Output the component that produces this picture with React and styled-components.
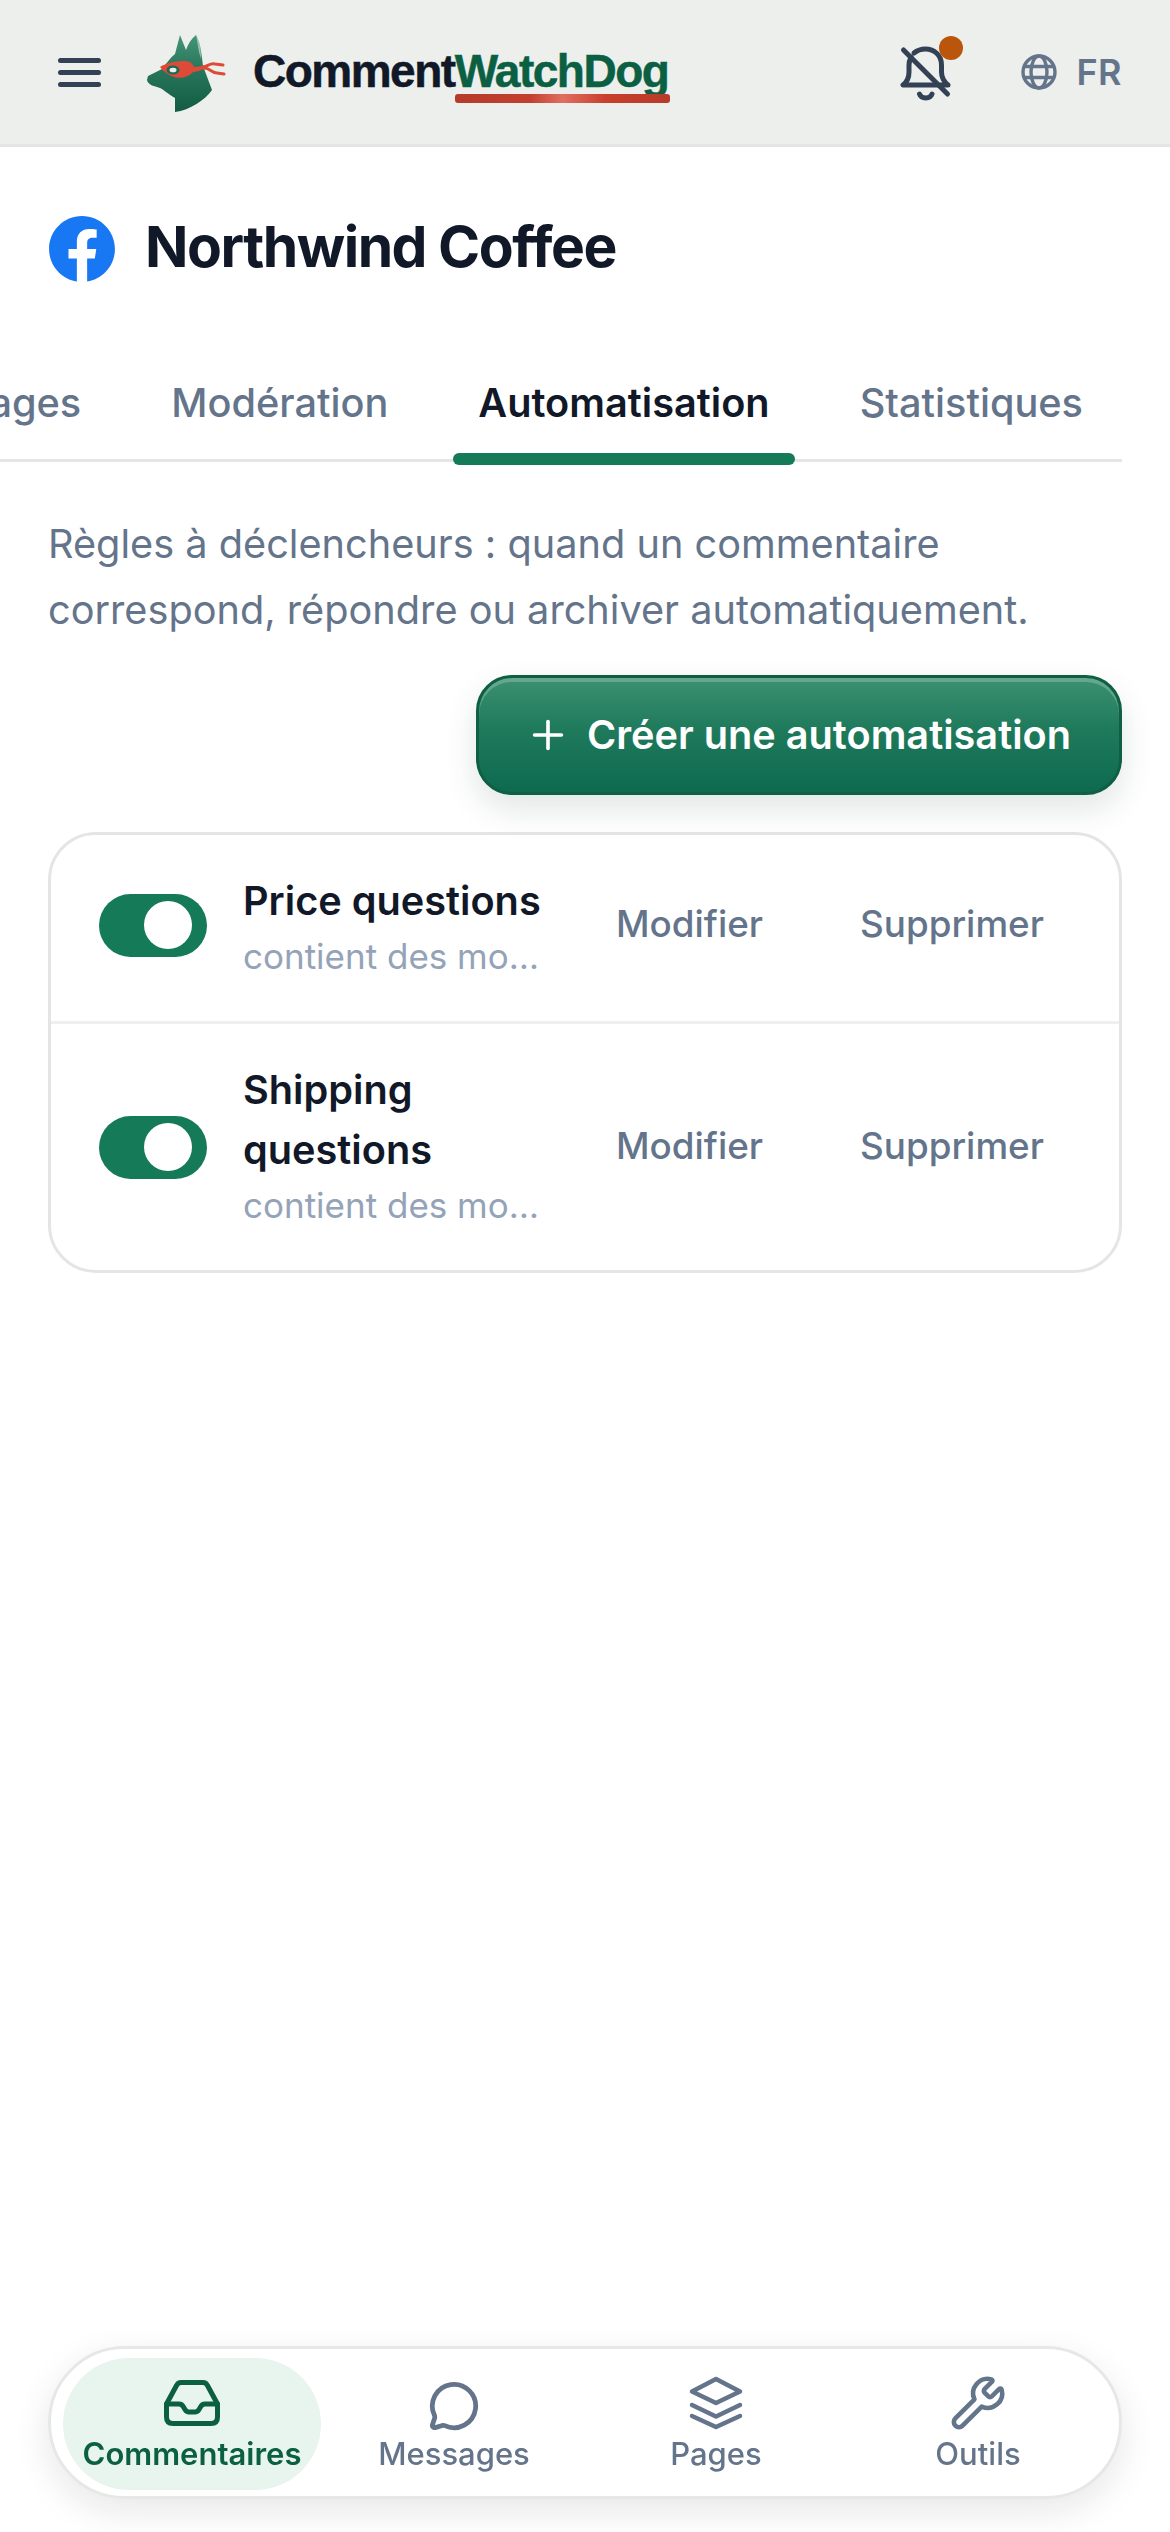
import React from 'react';
import styled, { createGlobalStyle } from 'styled-components';
import { FaFacebook } from 'react-icons/fa';
import { MessageCircle, Wrench, Plus } from 'lucide-react';

const Global = createGlobalStyle`
  html, body { margin: 0; padding: 0; background: #fff; }
  * { box-sizing: border-box; }
  body { font-family: Inter, "Noto Sans", sans-serif; }
`;

const Page = styled.div`
  width: 1170px;
  min-height: 2532px;
  background: #fff;
`;
const Header = styled.header`
  height: 147px;
  background: #ecefeb;
  border-bottom: 3px solid #e4e6e3;
  display: flex;
  align-items: center;
  padding: 0 48px 0 58px;
`;
const Burger = styled.button`
  width: 43px;
  height: 29px;
  padding: 0;
  border: 0;
  background: none;
  display: flex;
  flex-direction: column;
  justify-content: space-between;
  margin-right: 29px;
  span { display: block; height: 5px; border-radius: 3px; background: #334155; }
`;
const LogoMark = styled.svg`
  width: 120px;
  height: 100px;
  flex: none;
`;
const Word = styled.div`
  margin-left: 3px;
  font-family: "Liberation Sans", Arial, sans-serif;
  font-weight: 700;
  font-size: 46px;
  letter-spacing: -1.5px;
  line-height: 52px;
  color: #111827;
  margin-top: -2px;
  -webkit-text-stroke: 0.5px currentColor;
`;
const Green = styled.span`
  position: relative;
  color: #0b5f42;
  &::after {
    content: '';
    position: absolute;
    left: 0;
    right: -2px;
    top: 49px;
    height: 9px;
    border-radius: 3px;
    background: linear-gradient(90deg, #b63a2a 0%, #c4402e 35%, #e06f62 50%, #c93f2c 70%, #b83a2a 100%);
  }
`;
const Right = styled.div`
  margin-left: auto;
  display: flex;
  align-items: center;
`;
const BellBox = styled.div`
  position: relative;
  width: 60px;
  height: 60px;
  margin-right: 66px;
  margin-top: 3px;
`;
const Dot = styled.span`
  position: absolute;
  left: 44px;
  top: -8px;
  width: 24px;
  height: 24px;
  border-radius: 50%;
  background: #b9560c;
`;
const Lang = styled.div`
  display: flex;
  align-items: center;
  gap: 20px;
  font-size: 36px;
  font-weight: 600;
  color: #64748b;
  letter-spacing: 0.4px;
`;
const TitleRow = styled.div`
  display: flex;
  align-items: center;
  gap: 29px;
  padding: 69px 48px 0;
  height: 135px;
`;
const Title = styled.h1`
  margin: -5px 0 0;
  font-size: 57px;
  font-weight: 700;
  color: #111827;
  letter-spacing: -1.5px;
`;
const Tabs = styled.div`
  display: flex;
  justify-content: flex-end;
  gap: 40px;
  margin: 81px 48px 0 0;
  padding: 0 14px 0 0;
  height: 99px;
  border-bottom: 3px solid #e4e6e5;
  width: 1122px;
  clip-path: inset(0 -1px -6px 0);
`;
const Tab = styled.div`
  position: relative;
  flex: none;
  padding: 10px 25px 0;
  font-size: 39.7px;
  line-height: 60px;
  font-weight: ${p => (p.$active ? 600 : 500)};
  color: ${p => (p.$active ? '#111827' : '#64748b')};
  ${p => p.$active && `
    &::after {
      content: '';
      position: absolute;
      left: 0;
      right: 0;
      bottom: -6px;
      height: 12px;
      border-radius: 6px;
      background: #157a57;
    }
  `}
`;
const Description = styled.p`
  margin: 49px 48px 0;
  font-size: 39.7px;
  line-height: 66px;
  color: #64748b;
`;
const ActionBar = styled.div`
  display: flex;
  justify-content: flex-end;
  padding: 32px 48px 0;
`;
const CreateButton = styled.button`
  display: flex;
  align-items: center;
  gap: 16px;
  height: 120px;
  padding: 0 48px 0 46px;
  border-radius: 36px;
  border: 3px solid #0f5f45;
  color: #fff;
  font-family: inherit;
  font-size: 39.7px;
  font-weight: 600;
  background: linear-gradient(180deg, #3b9071 0%, #1f7a5c 45%, #0e6a4f 100%);
  box-shadow: inset 0 4px 0 rgba(255,255,255,.22), 0 14px 32px rgba(15,60,45,.13);
`;
const Card = styled.div`
  margin: 37px 48px 0;
  border: 3px solid #e4e6e5;
  border-radius: 48px;
  background: #fff;
`;
const Row = styled.div`
  display: flex;
  align-items: center;
  padding: 36px 0 36px 48px;
  & + & { border-top: 3px solid #eef0ef; }
`;
const Toggle = styled.span`
  flex: none;
  width: 108px;
  height: 63px;
  margin-bottom: ${p => p.$lift}px;
  border-radius: 32px;
  background: #157a57;
  display: flex;
  align-items: center;
  justify-content: flex-end;
  padding-right: 15px;
  &::before {
    content: '';
    width: 48px;
    height: 48px;
    border-radius: 50%;
    background: #fff;
  }
`;
const RowText = styled.div`
  width: 300px;
  flex: none;
  margin-left: 36px;
  min-width: 0;
`;
const RowTitle = styled.div`
  font-size: 39.7px;
  line-height: 60px;
  font-weight: 600;
  color: #111827;
`;
const RowSub = styled.div`
  font-size: 35px;
  line-height: 54px;
  margin: -2px 0 2px;
  color: #94a3b8;
  white-space: nowrap;
  overflow: hidden;
  text-overflow: ellipsis;
`;
const RowAction = styled.button`
  border: 0;
  background: none;
  padding: 0;
  font-family: inherit;
  font-size: 36.8px;
  font-weight: 500;
  color: #64748b;
  margin-left: ${p => p.$gap}px;
  margin-bottom: ${p => p.$lift}px;
`;
const BottomNav = styled.nav`
  position: fixed;
  left: 48px;
  top: 2346px;
  width: 1074px;
  height: 153px;
  border: 3px solid #e6e8e6;
  border-radius: 77px;
  background: #fff;
  box-shadow: 0 12px 36px rgba(15,23,42,.1);
  padding: 9px 10px;
  display: grid;
  grid-template-columns: repeat(4, 262px);
`;
const NavItem = styled.div`
  height: 132px;
  margin: 0 2px;
  border-radius: 66px;
  padding-top: 18px;
  display: flex;
  flex-direction: column;
  align-items: center;
  background: ${p => (p.$active ? '#e8f4ee' : 'transparent')};
  color: ${p => (p.$active ? '#0b5f42' : '#64748b')};
  font-size: 31px;
  font-weight: ${p => (p.$active ? 600 : 500)};
`;
const NavIcon = styled.div`
  height: 54px;
  display: flex;
  align-items: center;
  justify-content: center;
`;
const NavLabel = styled.div`
  line-height: 40px;
  margin-top: 4px;
`;
const MessageGlyph = styled(MessageCircle)`
  margin-top: 5px;
`;

const Dog = () => (
  <LogoMark viewBox="0 0 120 100" aria-hidden="true">
    <defs>
      <linearGradient id="dogFill" x1="0" y1="0" x2="0" y2="1">
        <stop offset="0" stopColor="#459578" />
        <stop offset=".45" stopColor="#27765b" />
        <stop offset="1" stopColor="#125c43" />
      </linearGradient>
    </defs>
    <path fill="url(#dogFill)" d="M45 90 L45 76 C38 72 34 68 30 66 C24 64 18 63 17 58 L18 54 L32 47 C36 42 40 36 45 32 L50 13 L56 28 C58 22 61 17 66 13 C70 20 71 28 72 36 L73 44 L82 68 C75 78 60 88 45 90 Z" />
    <path fill="#e8f1ec" opacity=".55" d="M66 13 C70 20 71 28 71 37 L69 30 C68 24 67 18 66 13 Z" />
    <path fill="#de4a38" d="M30 45 C36 41 46 39 55 39 C60 39 63 42 64 45 C68 45 72 44 74 43 L74 47 C70 48 67 50 63 50 C59 55 50 57 44 55 C38 53 33 49 30 45 Z" />
    <path fill="none" stroke="#de4a38" strokeWidth="3" strokeLinecap="round" d="M73 45 C78 44 80 41 85 42 L93 43 M74 46 C80 46 82 51 87 51 L94 52" />
    <ellipse cx="43" cy="48" rx="6.500" ry="4.500" fill="#1d6a50" />
    <ellipse cx="43" cy="48" rx="3.500" ry="2.300" fill="#e8f1ec" />
  </LogoMark>
);

const BellOff = () => (
  <svg width="60" height="60" viewBox="0 0 60 60" fill="none" stroke="#334155" strokeWidth="5" strokeLinecap="round" strokeLinejoin="round" aria-hidden="true">
    <path d="M16 13 C14.500 16 14 18 14 21 V28 C14 33 12 38 8 41 H53 C48 37 46.500 33 46.500 28 V21 C46.500 11 39 5 30.500 5 C26 5 22 6.500 19 9" />
    <path d="M8.500 6 L52.500 50" />
    <path d="M24.500 50 a6.500 5.500 0 0 0 12.500 0" />
  </svg>
);

const Globe = () => (
  <svg width="36" height="36" viewBox="0 0 36 36" fill="none" stroke="#64748b" strokeWidth="3.400" aria-hidden="true">
    <circle cx="18" cy="18" r="16" />
    <ellipse cx="18" cy="18" rx="8" ry="16" />
    <path d="M3.500 12.500 H32.500 M3.500 23.500 H32.500" />
  </svg>
);

const InboxIcon = () => (
  <svg width="60" height="50" viewBox="0 0 60 50" fill="none" stroke="#0b5f42" strokeWidth="5" strokeLinejoin="round" strokeLinecap="round" aria-hidden="true">
    <path d="M4.500 26 L14.500 7.500 Q16 4.500 19 4.500 H41 Q44 4.500 45.500 7.500 L55.500 26 V39 Q55.500 45.500 49 45.500 H11 Q4.500 45.500 4.500 39 Z" />
    <path d="M4.500 26 H17 Q20 26 21.500 29 L23 31.500 Q24.500 34 27 34 H33 Q35.500 34 37 31.500 L38.500 29 Q40 26 43 26 H55.500" />
  </svg>
);

const LayersIcon = () => (
  <svg width="60" height="54" viewBox="0 0 60 54" fill="none" stroke="#64748b" strokeWidth="4.500" strokeLinejoin="round" strokeLinecap="round" aria-hidden="true">
    <path d="M30 3 L54 15.500 L30 27 L6 15.500 Z" />
    <path d="M6 29 L30 40.500 L54 29" />
    <path d="M6 40 L30 51 L54 40" />
  </svg>
);

const rows = [
  { name: 'Price questions', toggleLift: 6, actionLift: 10 },
  { name: 'Shipping questions', toggleLift: 0, actionLift: 4 },
];

const navItems = [
  { label: 'Commentaires', icon: <InboxIcon />, active: true },
  { label: 'Messages', icon: <MessageGlyph size={52} strokeWidth={2.2} /> },
  { label: 'Pages', icon: <LayersIcon /> },
  { label: 'Outils', icon: <Wrench size={58} strokeWidth={1.9} /> },
];

export default function App() {
  return (
    <Page>
      <Global />
      <Header>
        <Burger aria-label="Menu"><span /><span /><span /></Burger>
        <Dog />
        <Word>Comment<Green>WatchDog</Green></Word>
        <Right>
          <BellBox><BellOff /><Dot /></BellBox>
          <Lang><Globe />FR</Lang>
        </Right>
      </Header>
      <TitleRow>
        <FaFacebook size={68} color="#1877f2" />
        <Title>Northwind Coffee</Title>
      </TitleRow>
      <Tabs>
        <Tab>Pages</Tab>
        <Tab>Modération</Tab>
        <Tab $active>Automatisation</Tab>
        <Tab>Statistiques</Tab>
      </Tabs>
      <Description>
        Règles à déclencheurs : quand un commentaire correspond, répondre ou archiver automatiquement.
      </Description>
      <ActionBar>
        <CreateButton><Plus size={46} strokeWidth={1.9} />Créer une automatisation</CreateButton>
      </ActionBar>
      <Card>
        {rows.map(r => (
          <Row key={r.name}>
            <Toggle $lift={r.toggleLift} />
            <RowText>
              <RowTitle>{r.name}</RowTitle>
              <RowSub>contient des mots-clés</RowSub>
            </RowText>
            <RowAction $gap={73} $lift={r.actionLift}>Modifier</RowAction>
            <RowAction $gap={97} $lift={r.actionLift}>Supprimer</RowAction>
          </Row>
        ))}
      </Card>
      <BottomNav>
        {navItems.map(n => (
          <NavItem key={n.label} $active={n.active}>
            <NavIcon>{n.icon}</NavIcon>
            <NavLabel>{n.label}</NavLabel>
          </NavItem>
        ))}
      </BottomNav>
    </Page>
  );
}
